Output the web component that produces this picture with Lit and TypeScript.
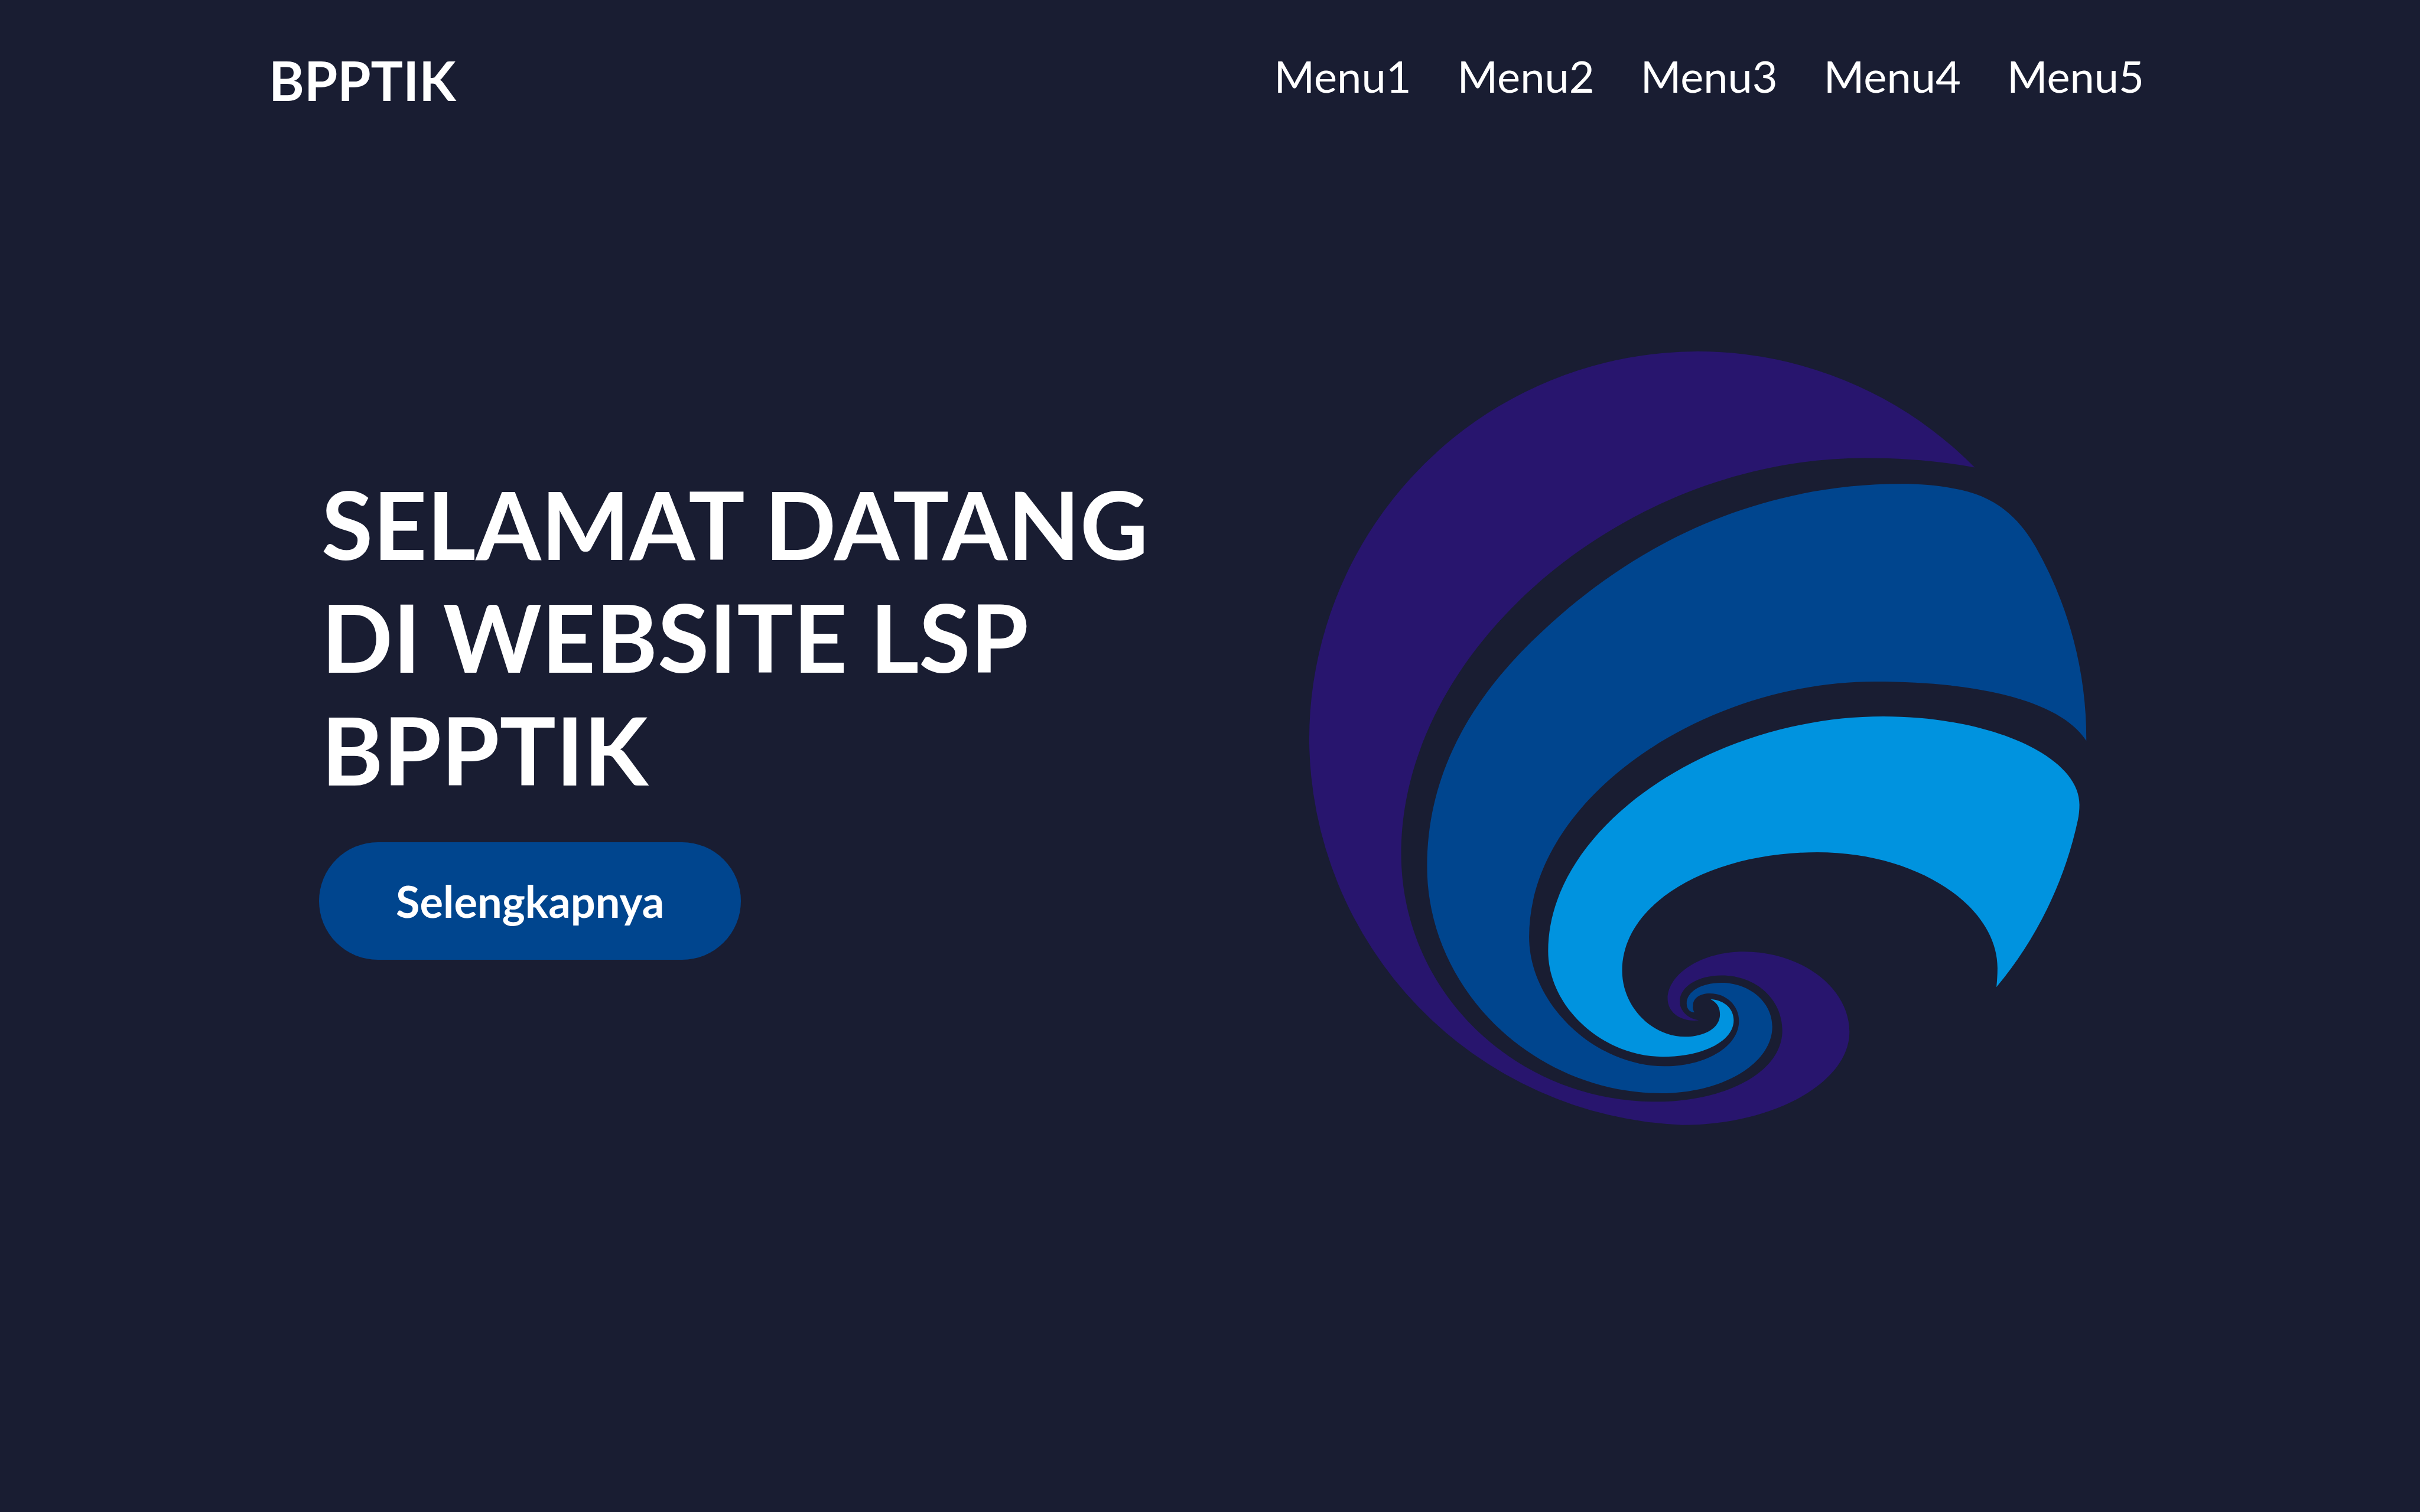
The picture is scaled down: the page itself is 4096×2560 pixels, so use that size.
import { LitElement, html, css } from "lit";
import { customElement } from "lit/decorators.js";

@customElement("wave-logo")
export class WaveLogo extends LitElement {
  static styles = css`
    :host {
      display: block;
    }
    .logo {
      display: block;
      width: 100%;
      height: auto;
    }
    .purple {
      fill: #28156e;
    }
    .blue {
      fill: #00458e;
    }
    .sky {
      fill: #0093df;
    }
  `;

  render() {
    return html`
      <svg class="logo" viewBox="0 0 1568 1568" role="img" aria-label="BPPTIK">
        <path
          class="purple"
          d="M1298 270A735 735 0 0 0 39 784A735 735 0 0 0 745 1514
             C920 1514 1061 1432 1061 1338C1061 1254 970 1186 861 1186
             C780 1186 717 1229 717 1275C717 1301 742 1320 776 1316
             C757 1313 740 1300 740 1280C740 1252 775 1231 819 1231
             C885 1231 934 1277 934 1335C934 1415 825 1470 696 1470
             C430 1470 213 1262 213 1000C213 615 633 252 1090 252
             C1165 252 1235 258 1298 270Z"
        />
        <path
          class="blue"
          d="M1509 787A735 735 0 0 0 1413 420C1389 378 1350 329 1271 312
             C1237 305 1200 301 1160 301C885 301 655 415 480 580
             C350 700 262 845 262 1025C262 1258 465 1454 706 1454
             C820 1454 915 1398 915 1328C915 1280 870 1245 819 1245
             C780 1245 753 1262 753 1284C753 1296 761 1301 768 1301
             C765 1297 764 1293 765 1288C765 1274 778 1265 797 1265
             C828 1265 852 1288 852 1317C852 1368 785 1403 712 1403
             C580 1403 455 1285 455 1158C455 895 785 675 1110 675
             C1300 675 1460 710 1509 787Z"
        />
        <path
          class="sky"
          d="M1339 1253A735 735 0 0 0 1493 937C1495 928 1496 918 1496 908
             C1496 815 1325 741 1125 741C800 741 491 950 491 1185
             C491 1293 597 1385 708 1385C785 1385 842 1355 842 1316
             C842 1295 826 1278 798 1276C812 1283 816 1293 816 1305
             C816 1330 788 1347 750 1347C687 1347 631 1290 631 1222
             C631 1092 800 998 1000 998C1190 998 1341 1100 1341 1217
             C1341 1230 1340 1243 1339 1253Z"
        />
      </svg>
    `;
  }
}

@customElement("app-root")
export class AppRoot extends LitElement {
  static styles = css`
    :host {
      display: block;
      min-height: 100vh;
      background: #191d32;
      color: #ffffff;
      font-family: Lato, "Liberation Sans", sans-serif;
    }
    .nav {
      display: flex;
      justify-content: space-between;
      align-items: center;
      padding: 81px 455px 0;
    }
    .brand {
      font-size: 91px;
      line-height: 110px;
      font-weight: 700;
      color: inherit;
      text-decoration: none;
    }
    .menu {
      display: flex;
      gap: 78px;
      margin: 0;
      padding: 0 12px 15px 0;
      list-style: none;
    }
    .menu-link {
      font-size: 74px;
      line-height: 90px;
      color: inherit;
      text-decoration: none;
    }
    .hero {
      display: flex;
      justify-content: space-between;
      align-items: center;
      padding: 359px 512px 0 540px;
    }
    .intro {
      flex: 0 1 1500px;
      padding-bottom: 88px;
    }
    .title {
      margin: 0 0 62px;
      padding-left: 4px;
      font-size: 159px;
      line-height: 191px;
      font-weight: 700;
    }
    .more {
      padding: 55px 130px;
      border: 0;
      border-radius: 100px;
      background: #00458e;
      color: inherit;
      font-family: inherit;
      font-size: 74px;
      line-height: 89px;
      font-weight: 700;
      cursor: pointer;
    }
    .picture {
      flex: 0 1 1403px;
    }
  `;

  private items = ["Menu1", "Menu2", "Menu3", "Menu4", "Menu5"];

  render() {
    return html`
      <header class="nav">
        <a class="brand" href="#">BPPTIK</a>
        <nav>
          <ul class="menu">
            ${this.items.map(
              (item) => html`<li><a class="menu-link" href="#${item.toLowerCase()}">${item}</a></li>`
            )}
          </ul>
        </nav>
      </header>
      <main class="hero">
        <div class="intro">
          <h1 class="title">SELAMAT DATANG DI WEBSITE LSP BPPTIK</h1>
          <button class="more" type="button">Selengkapnya</button>
        </div>
        <wave-logo class="picture"></wave-logo>
      </main>
    `;
  }
}
